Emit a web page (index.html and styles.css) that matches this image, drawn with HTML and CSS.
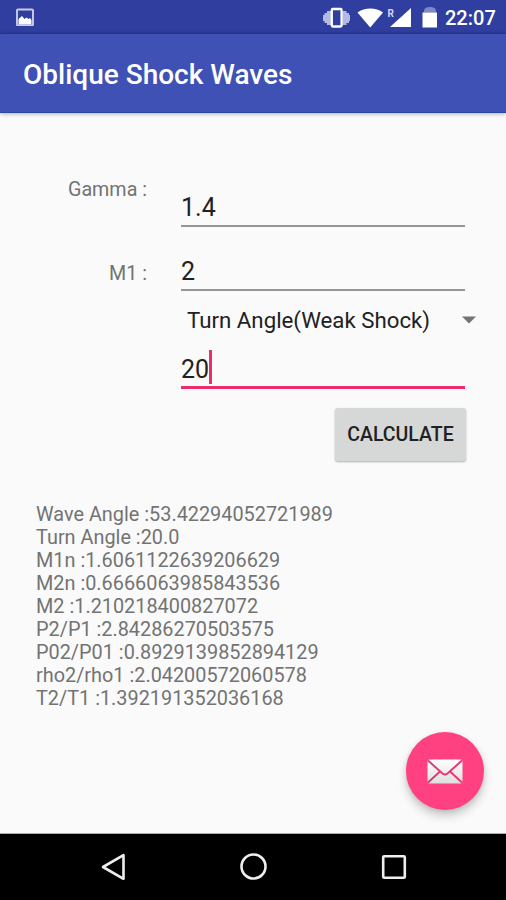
FILE: index.html
```html
<!DOCTYPE html>
<html lang="en">
<head>
<meta charset="utf-8">
<title>Oblique Shock Waves</title>
<link rel="stylesheet" href="styles.css">
</head>
<body>
<div class="screen">
  <div class="status">
    <svg class="picture" width="18" height="18" viewBox="0 0 18 18"><rect x="1" y="1.500" width="16" height="16" rx="1" fill="none" stroke="#c9cdea" stroke-width="1.900"/><path d="M2.500 16.500V11L6 8l2.500 3 2-1.500 2 1.500 1.500-1 1.500 2v4.500z" fill="#fff"/></svg>
    <svg class="system" width="118" height="24" viewBox="0 0 118 24">
      <path d="M4 7h4v14H4zM1.500 9H4v10H1.500v-2H0v-6h1.500zM19.500 7h4v14h-4zM23.500 9H26v2h1v6h-1v2h-2.500z" fill="#b3b9e0"/>
      <rect x="8.800" y="5" width="9.800" height="17.500" rx="1" fill="none" stroke="#fff" stroke-width="2.300"/>
      <path d="M34.500 8.500C41.500 3 53 3 60 8.500L47.200 23.500z" fill="#fff"/>
      <text x="64.500" y="12.500" class="roaming">R</text>
      <path d="M88 4v19H67z" fill="#fff"/>
      <path d="M101 8.500V7q0-4 6-4t6 4v1.500z" fill="#7f88c5"/>
      <path d="M99.500 8.500H114V23.500H99.500z" fill="#fff"/>
    </svg>
    <span class="clock">22:07</span>
  </div>
  <header class="toolbar"><h1>Oblique Shock Waves</h1></header>
  <main>
    <form class="form">
      <label class="label gamma">Gamma :</label><div class="field first"><span>1.4</span></div>
      <label class="label mach">M1 :</label><div class="field second"><span>2</span></div>
      <div class="spinner"><span>Turn Angle(Weak Shock)</span><svg width="14" height="8" viewBox="0 0 14 8"><path d="M0 .5h14L7 7.500z" fill="#737373"/></svg></div>
      <div class="field active"><span>20</span><i class="caret"></i></div>
      <button type="button">CALCULATE</button>
    </form>
    <div class="results">
      <div><span>Wave Angle :53.42294052721989</span></div>
      <div><span>Turn Angle :20.0</span></div>
      <div><span>M1n :1.6061122639206629</span></div>
      <div><span>M2n :0.6666063985843536</span></div>
      <div><span>M2 :1.210218400827072</span></div>
      <div><span>P2/P1 :2.84286270503575</span></div>
      <div><span>P02/P01 :0.8929139852894129</span></div>
      <div><span>rho2/rho1 :2.04200572060578</span></div>
      <div><span>T2/T1 :1.392191352036168</span></div>
    </div>
    <div class="fab">
      <svg width="36" height="25" viewBox="0 0 36 25"><defs><linearGradient id="paper" x2="0" y2="1"><stop stop-color="#fff"/><stop offset="1" stop-color="#dedede"/></linearGradient></defs><rect x=".5" y=".5" width="35" height="24" rx="2" fill="url(#paper)"/><path d="M1 1.500l14.500 13q2.500 2 5 0L35 1.500M1 23.500l12-11M35 23.500l-12-11" fill="none" stroke="#e73673" stroke-width="1.900"/></svg>
    </div>
  </main>
  <nav>
    <svg width="26" height="28" viewBox="0 0 26 28"><path d="M22.500 2.200v23.600L2 14z" fill="none" stroke="#eee" stroke-width="2.600" stroke-linejoin="round"/></svg>
    <svg width="28" height="28" viewBox="0 0 28 28"><circle cx="13.500" cy="13.500" r="12" fill="none" stroke="#eee" stroke-width="2.600"/></svg>
    <svg width="26" height="26" viewBox="0 0 26 26"><rect x="2.200" y="2.200" width="21.600" height="21.600" rx="1" fill="none" stroke="#eee" stroke-width="2.600"/></svg>
  </nav>
</div>
</body>
</html>
```
FILE: styles.css
```css
* { box-sizing: border-box; }
body { margin: 0; font-family: Roboto, sans-serif; }
svg { display: block; flex: none; }
.screen { width: 506px; height: 900px; display: flex; flex-direction: column; background: #fafafa; overflow: hidden; }
.status { height: 34px; flex: none; display: flex; background: linear-gradient(#303f9f 31px, #2b3789); color: #fff; }
.picture { margin: 8px 0 0 16px; }
.system { margin: 4px 0 0 289px; }
.roaming { font: 700 10px Roboto, sans-serif; fill: #d4d7ef; }
.clock { margin: 5px 0 0 4px; font-size: 20px; line-height: 26px; font-weight: 500; white-space: nowrap; }
.toolbar { height: 79px; flex: none; padding-left: 23px; display: flex; align-items: center; background: #3f51b5; border-bottom: 1px solid #2848a8; box-shadow: 0 1px 4px rgba(0,0,0,.3); }
h1 { margin: 3px 0 0; color: #fff; font-size: 28px; line-height: 34px; font-weight: 500; white-space: nowrap; }
main { height: 721px; flex: none; position: relative; border-bottom: 1px solid #aaa; }
.form { height: 390px; padding-top: 64px; display: grid; grid-template-columns: 148px 284px; column-gap: 33px; grid-template-rows: 50px 64px 58px 40px 72px; }
.label { padding-right: 1px; color: #737373; font-size: 19.700px; line-height: 24px; text-align: right; white-space: nowrap; }
.gamma { margin-top: 1px; }
.mach { margin-top: 35px; }
.field { border-bottom: 2px solid #969696; color: #212121; font-size: 25px; line-height: 30px; display: flex; align-items: flex-end; padding-bottom: 2px; }
.spinner { grid-column: 2; width: 295px; padding-left: 6px; display: flex; align-items: center; justify-content: space-between; color: #212121; font-size: 22.250px; white-space: nowrap; }
.active { grid-column: 2; border-bottom: 3px solid #ec2c6b; padding-bottom: 1px; }
.caret { width: 3px; height: 34px; margin-bottom: 1px; background: #ec2c6b; }
button { grid-column: 2; justify-self: end; width: 131px; height: 53px; margin: 19px -1px 0 0; padding: 0; border: 0; border-radius: 3px; background: #d6d7d7; box-shadow: 0 1px 2px rgba(0,0,0,.3); color: #212121; font: 500 19.500px Roboto, sans-serif; }
.results { padding-left: 36px; color: #737373; font-size: 19.870px; line-height: 23px; white-space: nowrap; }
.fab { position: absolute; right: 22px; bottom: 23px; width: 78px; height: 78px; border-radius: 50%; background: #ff4081; display: flex; align-items: center; justify-content: center; box-shadow: 0 6px 10px rgba(0,0,0,.2), 0 1px 4px rgba(0,0,0,.1); }
nav { flex: 1; padding: 0 99px 0 101px; display: flex; align-items: center; justify-content: space-between; background: #000; }
```
